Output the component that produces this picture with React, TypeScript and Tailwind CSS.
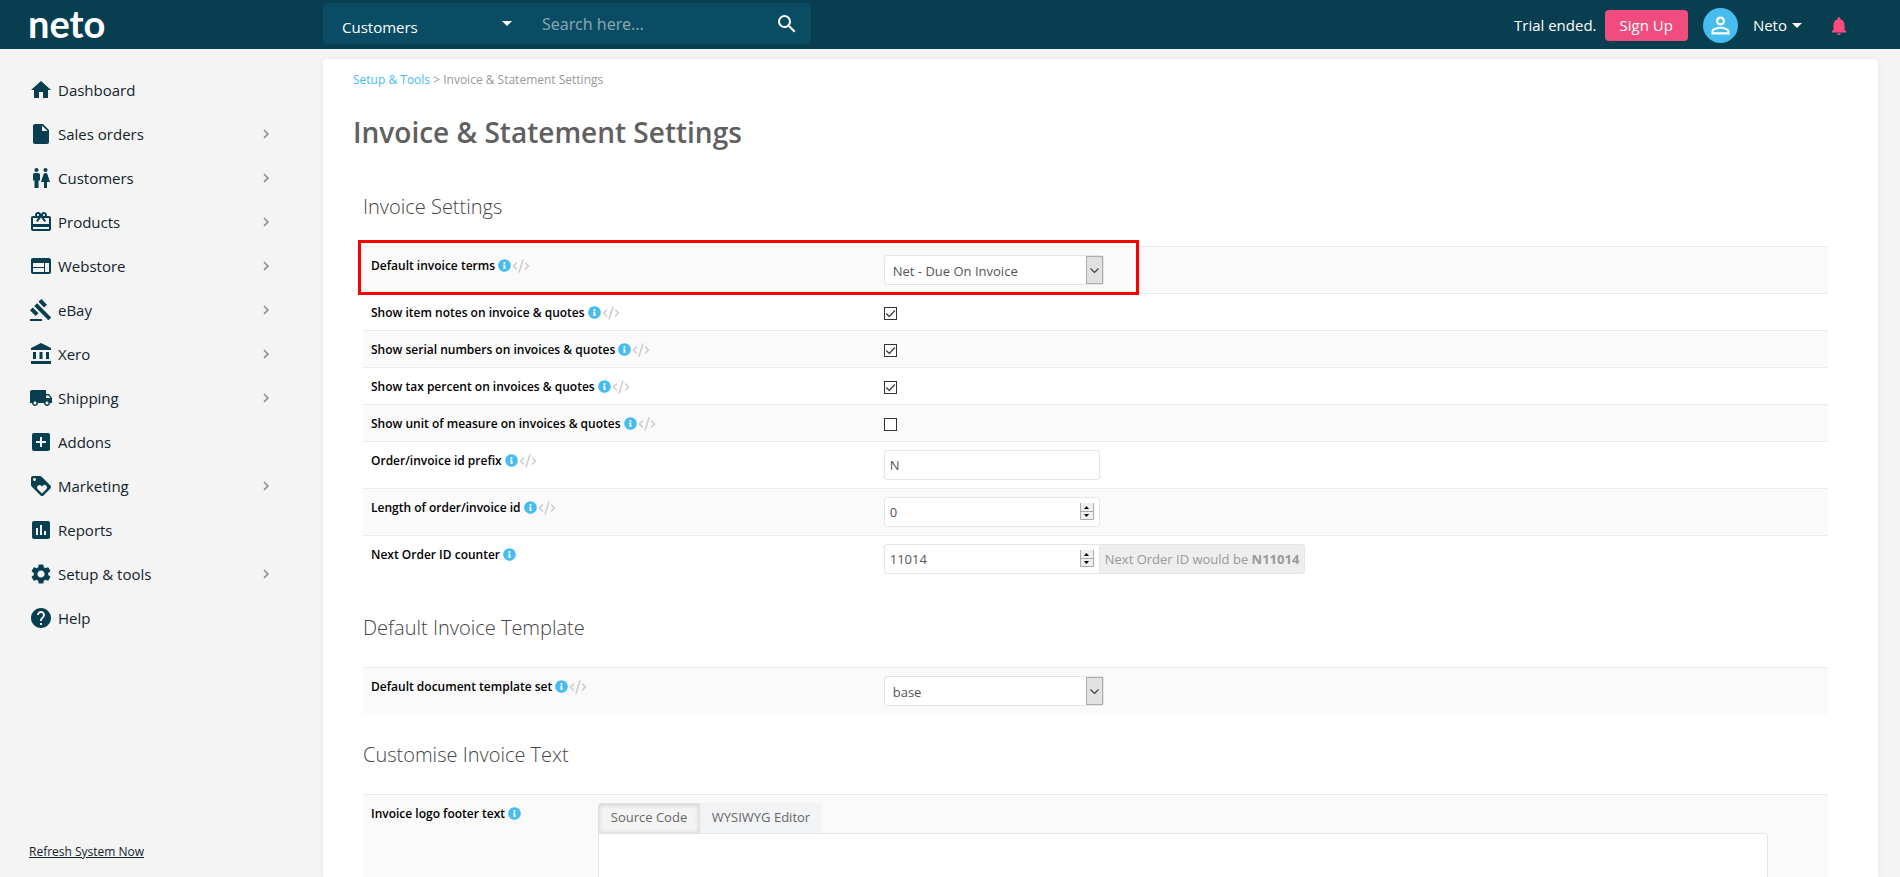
import type { ReactNode } from 'react'
import type { IconType } from 'react-icons'
import { CodeXml } from 'lucide-react'
import { FaInfoCircle } from 'react-icons/fa'
import {
  MdAccountBalance,
  MdAddBox,
  MdAssessment,
  MdCardGiftcard,
  MdChevronRight,
  MdGavel,
  MdHelp,
  MdHome,
  MdInsertDriveFile,
  MdLocalShipping,
  MdLoyalty,
  MdNotifications,
  MdPersonOutline,
  MdSearch,
  MdSettings,
  MdWc,
  MdWeb,
} from 'react-icons/md'

type NavItem = { label: string; icon: IconType; expandable?: boolean }

const navItems: NavItem[] = [
  { label: 'Dashboard', icon: MdHome },
  { label: 'Sales orders', icon: MdInsertDriveFile, expandable: true },
  { label: 'Customers', icon: MdWc, expandable: true },
  { label: 'Products', icon: MdCardGiftcard, expandable: true },
  { label: 'Webstore', icon: MdWeb, expandable: true },
  { label: 'eBay', icon: MdGavel, expandable: true },
  { label: 'Xero', icon: MdAccountBalance, expandable: true },
  { label: 'Shipping', icon: MdLocalShipping, expandable: true },
  { label: 'Addons', icon: MdAddBox },
  { label: 'Marketing', icon: MdLoyalty, expandable: true },
  { label: 'Reports', icon: MdAssessment },
  { label: 'Setup & tools', icon: MdSettings, expandable: true },
  { label: 'Help', icon: MdHelp },
]

function Caret() {
  return (
    <svg width="10" height="5" viewBox="0 0 10 5" fill="currentColor" aria-hidden="true">
      <path d="M0 0h10L5 5z" />
    </svg>
  )
}

function Header() {
  return (
    <header className="flex h-[49px] shrink-0 bg-[#073e50] text-[15px] text-white">
      <div className="flex w-[323px] shrink-0 items-start pl-7">
        <a href="#" className="font-['Lato',sans-serif] text-[38px] leading-[46px] font-bold">
          neto
        </a>
      </div>

      <form className="mt-[3px] flex h-[41px] w-[488px] items-center rounded bg-[#0a4c63]">
        <button type="button" className="flex h-full w-[189px] items-center justify-between pl-[19px]">
          <span className="pt-2">Customers</span>
          <Caret />
        </button>
        <input
          type="search"
          aria-label="Search"
          placeholder="Search here..."
          className="ml-[30px] min-w-0 flex-1 bg-transparent font-['Noto_Sans',sans-serif] text-base outline-none placeholder:text-[#85a6b1]"
        />
        <button type="submit" aria-label="Submit search" className="mr-3">
          <MdSearch size={24} />
        </button>
      </form>

      <div className="ml-auto flex items-center pt-[2px] pr-[50px]">
        <span>Trial ended.</span>
        <button type="button" className="ml-2 h-[31px] rounded bg-[#f04c7f] px-[15px]">
          Sign Up
        </button>
        <button type="button" className="ml-[15px] flex items-center">
          <span className="flex size-[35px] items-center justify-center rounded-full bg-[#46bdee]">
            <MdPersonOutline size={27} />
          </span>
          <span className="mr-[5px] ml-[15px]">Neto</span>
          <Caret />
        </button>
        <button type="button" aria-label="Notifications" className="ml-[26px] text-[#ff4a7d]">
          <MdNotifications size={22} />
        </button>
      </div>
    </header>
  )
}

function Sidebar() {
  return (
    <aside className="flex w-[323px] shrink-0 flex-col justify-between pt-[19px] pb-[15px]">
      <nav>
        {navItems.map(({ label, icon: Icon, expandable }) => (
          <a
            key={label}
            href="#"
            className="flex h-11 items-center pr-12 pl-[29px] text-[15px] text-[#12232b]"
          >
            <Icon size={24} className="mr-[5px] text-[#073e50]" />
            <span className="flex-1">{label}</span>
            {expandable && <MdChevronRight size={18} className="text-[#888]" />}
          </a>
        ))}
      </nav>
      <a href="#" className="ml-[29px] self-start text-xs leading-5 text-[#12232b] underline">
        Refresh System Now
      </a>
    </aside>
  )
}

function Section({ title, children }: { title: string; children: ReactNode }) {
  return (
    <section className="mb-6">
      <h2 className="mb-[22px] text-xl leading-[34px] font-light text-[#444]">{title}</h2>
      {children}
    </section>
  )
}

type RowProps = {
  id: string
  label: string
  code?: boolean
  striped?: boolean
  highlighted?: boolean
  labelWidth?: string
  children: ReactNode
}

function Row({ id, label, code = true, striped, highlighted, labelWidth = 'w-[35%]', children }: RowProps) {
  return (
    <div className={`relative flex border-t border-[#ececec] ${striped ? 'bg-[#fafafa]' : ''}`}>
      <div className={`flex shrink-0 items-start px-2 pt-2 pb-1 ${labelWidth}`}>
        <label htmlFor={id} className="text-xs leading-[22px] font-semibold text-black">
          {label}
        </label>
        <FaInfoCircle size={13} className="mt-1 ml-[3px] text-[#46bdee]" />
        {code && <CodeXml size={18} strokeWidth={2} className="mt-[2px] ml-[1px] text-[#ccc]" />}
      </div>
      <div className="min-w-0 flex-1 p-2">{children}</div>
      {highlighted && (
        <div className="pointer-events-none absolute -top-[7px] -left-[5px] z-10 h-[55px] w-[781px] border-3 border-[#ff0000]" />
      )}
    </div>
  )
}

function SelectField({ id, value }: { id: string; value: string }) {
  return (
    <div className="relative w-[220px]">
      <select
        id={id}
        className="block h-[30px] w-full appearance-none rounded-[3px] border border-[#e5e5e5] bg-white pt-[3px] pl-2 text-[13px] text-[#555]"
      >
        <option>{value}</option>
      </select>
      <span className="pointer-events-none absolute inset-y-px right-px flex w-[17px] items-center justify-center border border-[#adadad] bg-[#e1e1e1]">
        <svg width="9" height="5" viewBox="0 0 9 5" fill="none" stroke="#444" strokeWidth="1.2">
          <path d="M.5.5l4 4 4-4" />
        </svg>
      </span>
    </div>
  )
}

function CheckField({ id, checked }: { id: string; checked?: boolean }) {
  return (
    <div className="relative mt-[5px] mb-[2px] size-[13px]">
      <input
        id={id}
        type="checkbox"
        defaultChecked={checked}
        className="peer block size-full appearance-none border border-[#333] bg-white"
      />
      <svg
        viewBox="0 0 13 13"
        fill="none"
        stroke="#444"
        strokeWidth="1.4"
        className="pointer-events-none absolute inset-0 hidden peer-checked:block"
      >
        <path d="M2.3 6.5l3 3 5.6-6" />
      </svg>
    </div>
  )
}

function NumberField({ id, value }: { id: string; value: number }) {
  return (
    <div className="relative w-[216px]">
      <input
        id={id}
        type="number"
        defaultValue={value}
        className="block h-[30px] w-full [appearance:textfield] rounded-[3px] border border-[#e5e5e5] bg-white pl-[5px] text-[13px] text-[#555]"
      />
      <svg width="14" height="17" viewBox="0 0 14 17" className="pointer-events-none absolute top-[6px] right-[6px]">
        <path d="M0 0h14v17H0z" fill="#efefef" />
        <path d="M.5 0v16.5h13V0M0 8.5h14" fill="none" stroke="#aaa" />
        <path d="M4 6h5L6.500 3zM4 11h5l-2.500 3z" fill="#000" />
      </svg>
    </div>
  )
}

export default function App() {
  return (
    <div className="flex h-screen flex-col overflow-hidden bg-[#f4f4f4] font-['Open_Sans','Noto_Sans',sans-serif]">
      <Header />
      <div className="flex min-h-0 flex-1">
        <Sidebar />
        <main className="mt-[10px] mr-[22px] min-w-0 flex-1 overflow-hidden rounded-t bg-white shadow-[0_0_8px_rgba(0,0,0,0.05)]">
          <div className="px-[30px] pt-[11px] text-[12px] leading-5 text-[#999]">
            <a href="#" className="text-[#46bdee]">
              Setup &amp; Tools
            </a>{' '}
            &gt; Invoice &amp; Statement Settings
          </div>
          <h1 className="mt-[22px] px-[30px] text-[28px] leading-10 font-semibold text-[#606060]">
            Invoice &amp; Statement Settings
          </h1>

          <form className="mt-[38px] pr-[50px] pl-10">
            <Section title="Invoice Settings">
              <Row id="terms" label="Default invoice terms" striped highlighted>
                <SelectField id="terms" value="Net - Due On Invoice" />
              </Row>
              <Row id="notes" label="Show item notes on invoice & quotes">
                <CheckField id="notes" checked />
              </Row>
              <Row id="serials" label="Show serial numbers on invoices & quotes" striped>
                <CheckField id="serials" checked />
              </Row>
              <Row id="tax" label="Show tax percent on invoices & quotes">
                <CheckField id="tax" checked />
              </Row>
              <Row id="unit" label="Show unit of measure on invoices & quotes" striped>
                <CheckField id="unit" />
              </Row>
              <Row id="prefix" label="Order/invoice id prefix">
                <input
                  id="prefix"
                  type="text"
                  defaultValue="N"
                  className="block h-[30px] w-[216px] rounded-[3px] border border-[#e5e5e5] bg-white pl-[5px] text-[13px] text-[#555]"
                />
              </Row>
              <Row id="length" label="Length of order/invoice id" striped>
                <NumberField id="length" value={0} />
              </Row>
              <Row id="counter" label="Next Order ID counter" code={false}>
                <div className="mb-[5px] flex">
                  <NumberField id="counter" value={11014} />
                  <span className="-ml-px flex h-[30px] items-center rounded-r-[3px] border border-[#e5e5e5] bg-[#eee] px-[5px] pt-[2px] text-[13px] whitespace-pre text-[#999]">
                    Next Order ID would be <b>N11014</b>
                  </span>
                </div>
              </Row>
            </Section>

            <Section title="Default Invoice Template">
              <Row id="template" label="Default document template set" striped>
                <SelectField id="template" value="base" />
              </Row>
            </Section>

            <Section title="Customise Invoice Text">
              <Row id="footer" label="Invoice logo footer text" code={false} striped labelWidth="w-[227px]">
                <div className="flex h-[30px] text-[13px] text-[#666]">
                  <button
                    type="button"
                    className="w-[102px] rounded-tl-[3px] border border-[#e0e0e0] bg-[#f4f4f4] inset-shadow-[0_1px_5px_rgba(0,0,0,0.15)]"
                  >
                    Source Code
                  </button>
                  <button type="button" className="w-[122px] rounded-tr-[3px] bg-[#f2f3f5]">
                    WYSIWYG Editor
                  </button>
                </div>
                <textarea
                  id="footer"
                  rows={8}
                  className="block w-[calc(100%-52px)] resize-none rounded-tr-[3px] border border-[#e5e5e5] bg-white p-2 text-[13px]"
                />
              </Row>
            </Section>
          </form>
        </main>
      </div>
    </div>
  )
}
